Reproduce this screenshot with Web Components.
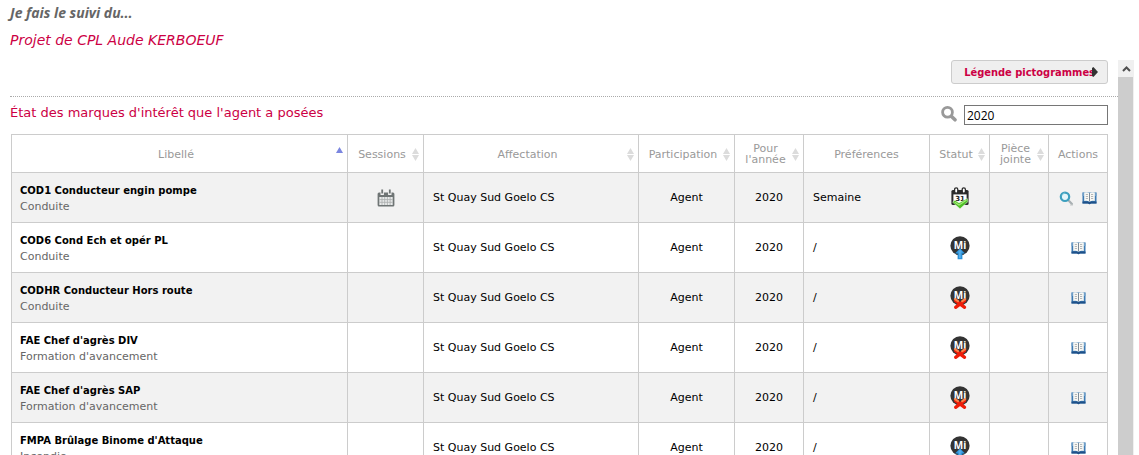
<!DOCTYPE html>
<html lang="fr">
<head>
<meta charset="utf-8">
<title>Suivi des marques d'intérêt</title>
<style>
  html, body { height: 100%; }
  body {
    margin: 0;
    overflow: hidden;
    background: #fff;
    color: #000;
    font-family: Verdana, "DejaVu Sans", sans-serif;
    font-size: 11px;
  }
</style>
</head>
<body>
<suivi-page>
  <span slot="intro">Je fais le suivi du...</span>
  <span slot="project">Projet de CPL Aude KERBOEUF</span>
  <legend-button slot="tools">Légende pictogrammes</legend-button>
  <span slot="title">État des marques d'intérêt que l'agent a posées</span>
  <search-box slot="search" data-value="2020"></search-box>
  <marques-table></marques-table>
</suivi-page>

<script>
const makeTemplate = (html) => {
  const template = document.createElement("template");
  template.innerHTML = html;
  return template;
};

// every icon of the page, by name
const icons = {
  search: `<svg width="16" height="16" viewBox="0 0 16 16">
    <circle cx="6.5" cy="6.3" r="4.9" fill="#fff" stroke="#999" stroke-width="2.8"/>
    <path d="M10.3 10.3L14 13.8" stroke="#999" stroke-width="3.6" stroke-linecap="round"/></svg>`,
  view: `<svg width="15" height="15" viewBox="0 0 15 15">
    <path d="M9.6 9.4L13 13" stroke="#a9b0b3" stroke-width="2.2" stroke-linecap="round"/>
    <path d="M11 14h3" stroke="#c5c8c9" stroke-width="1"/>
    <circle cx="6" cy="5.8" r="4.2" fill="#e4f5fa" stroke="#3d9fbe" stroke-width="2.2"/>
    <path d="M3 4.4a3.6 3.6 0 0 1 3-2.4" fill="none" stroke="#7cc8dc" stroke-width="1"/></svg>`,
  book: `<svg width="15" height="14" viewBox="0 0 15 14">
    <path d="M.5 1.6H14.5V12.4H9L7.5 13.2L6 12.4H.5z" fill="#3d7ab3"/>
    <path d="M.5 1.6H14.5V5H.5z" fill="#6f9fc8"/>
    <path d="M.5 10.6H14.5V12.4H9L7.5 13.2L6 12.4H.5z" fill="#1f5088"/>
    <path d="M2.2 1.4Q5.4.8 7.5 1.9Q9.6.8 12.8 1.4V10Q9.6 9.4 7.5 10.8Q5.4 9.4 2.2 10z" fill="#f8f8f4"/>
    <path d="M7.5 2V10.4" stroke="#6d7d8c" stroke-width=".9"/>
    <path d="M3.8 3.5H6M3.8 5.5H6M3.8 7.5H6M9 3.5H11.2M9 5.5H11.2M9 7.5H11.2" stroke="#b4b6b8" stroke-width="1"/></svg>`,
  sessions: `<svg width="18" height="18" viewBox="0 0 18 18">
    <path d="M2 3.5H16Q17.4 3.5 17.4 5V16Q17.4 17.6 16 17.6H2Q.6 17.6 .6 16V5Q.6 3.5 2 3.5z" fill="#6f7575"/>
    <path d="M2.3 8H15.7V16H2.3z" fill="#e8eaea"/>
    <path d="M5 8V16M7.7 8V16M10.4 8V16M13.1 8V16M2.3 10.6H15.7M2.3 13.3H15.7" stroke="#a8acac" stroke-width=".8"/>
    <path d="M5.2 0V6M12.8 0V6" stroke="#f2f2f2" stroke-width="3.4"/>
    <path d="M5.2 .4V4.6M12.8 .4V4.6" stroke="#6f7575" stroke-width="1.8"/></svg>`,
  planned: `<svg width="20" height="24" viewBox="0 0 20 24">
    <rect x="1.4" y="4" width="17.2" height="15" rx="1.5" fill="#2b2b2b"/>
    <path d="M3.4 8.4H16.6V17H3.4z" fill="#fff"/>
    <rect x="4.6" y="1.8" width="3.2" height="5.4" rx="1.6" fill="#fff" stroke="#2b2b2b" stroke-width="1.3"/>
    <rect x="12.2" y="1.8" width="3.2" height="5.4" rx="1.6" fill="#fff" stroke="#2b2b2b" stroke-width="1.3"/>
    <text x="10" y="14.6" text-anchor="middle" font-family="DejaVu Sans" font-size="7" font-weight="bold" fill="#222">31</text>
    <path d="M2.6 16.2L5 14.2L9 17L17.2 12.4L18 15.6L10 22.8z" fill="#4fc127" stroke="#e2f5d8" stroke-width=".5"/>
    <path d="M4.6 16L9 19L16.6 14" fill="none" stroke="#a4ea78" stroke-width="1.1"/></svg>`,
  sent: `<svg width="20" height="24" viewBox="0 0 20 24">
    <circle cx="10" cy="9.8" r="9.6" fill="#333"/>
    <text x="10" y="12.6" text-anchor="middle" font-family="Open Sans" font-size="10" font-weight="bold" fill="#fff">Mi</text>
    <path d="M10 12.2L15 17.6H12.4V23.2H7.6V17.6H5z" fill="#2a92da"/>
    <path d="M10 13.6L12.6 16.6H10.8V22H9V16.6H7.6z" fill="#55aeea"/></svg>`,
  refused: `<svg width="20" height="24" viewBox="0 0 20 24">
    <circle cx="10" cy="9.8" r="9.6" fill="#333"/>
    <text x="10" y="12.6" text-anchor="middle" font-family="Open Sans" font-size="10" font-weight="bold" fill="#fff">Mi</text>
    <path d="M5.6 14.6L14.6 21.4M14.6 14.6L5.6 21.4" stroke="#ee1c08" stroke-width="3.2" stroke-linecap="round"/>
    <path d="M5 13.2L8 15.2M15.2 13.2L12.2 15.2" stroke="#ff8248" stroke-width="2.2" stroke-linecap="round"/></svg>`,
  sort: `<svg width="7" height="13" viewBox="0 0 7 13">
    <path d="M3.5 0L7 6H0z" fill="#dcdcdc"/><path d="M0 7H7L3.5 13z" fill="#dcdcdc"/></svg>`,
  sortAsc: `<svg width="7" height="15" viewBox="0 0 7 15"><path d="M3.5 0L7 6H0z" fill="#7b86e0"/></svg>`,
  right: `<svg width="6" height="10" viewBox="0 0 6 10"><path d="M0 1L1.4 0L6 5L1.4 10L0 9z" fill="#333"/></svg>`,
  up: `<svg width="9" height="6" viewBox="0 0 9 6"><path d="M1 5L4.5 1.5L8 5" fill="none" stroke="#505050" stroke-width="2"/></svg>`
};

class PictoIcon extends HTMLElement {
  constructor() {
    super();
    this.attachShadow({ mode: "open" });
  }

  connectedCallback() {
    this.shadowRoot.innerHTML = `
      <style>
        :host { display: inline-block; flex: none; line-height: 0; }
        svg { display: block; }
      </style>
      ${icons[this.getAttribute("data-name")]}`;
  }
}
customElements.define("picto-icon", PictoIcon);

const legendTemplate = makeTemplate(`
<style>
  :host { display: block; }
  button {
    position: relative;
    display: block;
    height: 24px;
    padding: 0 12px;
    border: 1px solid #ccc;
    border-radius: 3px;
    background: #efefef;
    color: #cc0044;
    font: bold 11px "DejaVu Sans Condensed", "DejaVu Sans", sans-serif;
    white-space: nowrap;
  }
  /* the arrow lies over the end of the label */
  picto-icon { position: absolute; right: 9px; top: 6px; }
</style>
<button type="button"><slot></slot><picto-icon data-name="right"></picto-icon></button>
`);

class LegendButton extends HTMLElement {
  constructor() {
    super();
    this.attachShadow({ mode: "open" });
    this.shadowRoot.appendChild(legendTemplate.content.cloneNode(true));
  }
}
customElements.define("legend-button", LegendButton);

const searchTemplate = makeTemplate(`
<style>
  :host { display: flex; align-items: center; gap: 7px; }
  label { display: block; }
  input {
    box-sizing: border-box;
    width: 144px;
    height: 20px;
    padding: 1px 2px;
    border: 1px solid #767676;
    border-radius: 0;
    background: #fff;
    color: #000;
    font: 12px "Open Sans", sans-serif;
  }
</style>
<label for="filter" aria-label="Rechercher"><picto-icon data-name="search"></picto-icon></label>
<input id="filter" type="text">
`);

class SearchBox extends HTMLElement {
  constructor() {
    super();
    this.attachShadow({ mode: "open" });
    this.shadowRoot.appendChild(searchTemplate.content.cloneNode(true));
  }

  connectedCallback() {
    this.shadowRoot.querySelector("input").value = this.getAttribute("data-value") || "";
  }
}
customElements.define("search-box", SearchBox);

const columns = [
  { label: "Libellé", sort: "sortAsc" },
  { label: "Sessions", sort: "sort", width: 76 },
  { label: "Affectation", sort: "sort", width: 215 },
  { label: "Participation", sort: "sort", width: 96 },
  { label: "Pour<br>l'année", sort: "sort", width: 69 },
  { label: "Préférences", width: 126 },
  { label: "Statut", sort: "sort", width: 60 },
  { label: "Pièce<br>jointe", sort: "sort", width: 59 },
  { label: "Actions", width: 59 }
];

const rows = [
  { name: "COD1 Conducteur engin pompe", type: "Conduite", sessions: true, pref: "Semaine", status: "planned" },
  { name: "COD6 Cond Ech et opér PL", type: "Conduite", pref: "/", status: "sent" },
  { name: "CODHR Conducteur Hors route", type: "Conduite", pref: "/", status: "refused" },
  { name: "FAE Chef d'agrès DIV", type: "Formation d'avancement", pref: "/", status: "refused" },
  { name: "FAE Chef d'agrès SAP", type: "Formation d'avancement", pref: "/", status: "refused" },
  { name: "FMPA Brûlage Binome d'Attaque", type: "Incendie", pref: "/", status: "sent" }
];

class MarquesTable extends HTMLElement {
  constructor() {
    super();
    this.attachShadow({ mode: "open" });
  }

  connectedCallback() {
    this.render();
  }

  headCell(col) {
    const label = `<span>${col.label}</span>`;
    if (!col.sort) return `<th>${label}</th>`;
    return `<th><button type="button">${label}<picto-icon data-name="${col.sort}"></picto-icon></button></th>`;
  }

  bodyRow(row) {
    const action = (name, title) =>
      `<a href="#" aria-label="${title}"><picto-icon data-name="${name}"></picto-icon></a>`;
    return `<tr>
      <td class="name"><b>${row.name}</b><small>${row.type}</small></td>
      <td class="center">${row.sessions ? `<picto-icon data-name="sessions"></picto-icon>` : ""}</td>
      <td>St Quay Sud Goelo CS</td>
      <td class="center">Agent</td>
      <td class="center">2020</td>
      <td>${row.pref}</td>
      <td class="center"><picto-icon data-name="${row.status}"></picto-icon></td>
      <td></td>
      <td><div class="actions">${row.sessions ? action("view", "Voir") : ""}${action("book", "Fiche")}</div></td>
    </tr>`;
  }

  render() {
    this.shadowRoot.innerHTML = `
      <style>
        :host { display: block; }
        table {
          width: 100%;
          table-layout: fixed;
          border-collapse: collapse;
          line-height: 16px;
        }
        th, td { border: 1px solid #ccc; box-sizing: border-box; }
        th {
          height: 38px;
          padding: 1px 4px 0 4px;
          color: #999;
          font-weight: normal;
          line-height: 11px;
        }
        th button {
          display: flex;
          align-items: center;
          width: 100%;
          padding: 0;
          border: 0;
          background: none;
          color: inherit;
          font: inherit;
        }
        th button span { flex: 1; text-align: center; white-space: nowrap; }
        td { height: 50px; padding: 1px 9px 0; }
        td.name { padding: 2px 8px 0; }
        tbody tr:nth-child(odd) { background: #f2f2f2; }
        td picto-icon { vertical-align: middle; }
        .center { padding: 1px 8px 0; text-align: center; }
        .actions { display: flex; justify-content: center; gap: 8px; margin: 0 -4px; }
        b, small { display: block; white-space: nowrap; }
        b { font-size: 10px; }
        small { color: #666; font-size: 11px; }
      </style>
      <table>
        <colgroup>${columns.map((c) => `<col${c.width ? ` style="width:${c.width}px"` : ""}>`).join("")}</colgroup>
        <thead><tr>${columns.map((c) => this.headCell(c)).join("")}</tr></thead>
        <tbody>${rows.map((r) => this.bodyRow(r)).join("")}</tbody>
      </table>`;
  }
}
customElements.define("marques-table", MarquesTable);

const scrollTemplate = makeTemplate(`
<style>
  :host { display: flex; flex-direction: column; width: 16px; background: #f0f0f0; }
  button {
    display: flex;
    align-items: center;
    justify-content: center;
    height: 17px;
    padding: 0;
    border: 0;
    background: none;
  }
  .thumb { flex: 1; margin-right: 1px; background: #cdcdcd; }
</style>
<button type="button" aria-label="Haut"><picto-icon data-name="up"></picto-icon></button>
<div class="thumb"></div>
`);

class ScrollRail extends HTMLElement {
  constructor() {
    super();
    this.attachShadow({ mode: "open" });
    this.shadowRoot.appendChild(scrollTemplate.content.cloneNode(true));
  }
}
customElements.define("scroll-rail", ScrollRail);

const pageTemplate = makeTemplate(`
<style>
  :host { display: flex; flex-direction: column; height: 100%; }
  header { padding: 4px 10px 10px; }
  h1, h2, h3 { margin: 0; font-weight: normal; }
  h1 {
    color: #666;
    font: italic bold 14px/18px "Open Sans", sans-serif;
  }
  h2 {
    margin-top: 8px;
    color: #cc0044;
    font-size: 14px;
    font-style: italic;
    line-height: 20px;
  }
  h3 { color: #cc0044; font-size: 13px; line-height: 16px; }
  .body { display: flex; flex: 1; min-height: 0; padding-right: 5px; }
  main { flex: 1; min-width: 0; overflow: hidden; padding-left: 10px; }
  .tools {
    display: flex;
    justify-content: flex-end;
    padding: 0 10px 12px 0;
    border-bottom: 1px dotted #aaa;
  }
  .bar {
    display: flex;
    justify-content: space-between;
    padding: 8px 10px 9px 0;
  }
  .list { padding: 0 10px 0 1px; }
</style>
<header>
  <h1><slot name="intro"></slot></h1>
  <h2><slot name="project"></slot></h2>
</header>
<div class="body">
  <main>
    <div class="tools"><slot name="tools"></slot></div>
    <div class="bar"><h3><slot name="title"></slot></h3><slot name="search"></slot></div>
    <div class="list"><slot></slot></div>
  </main>
  <scroll-rail></scroll-rail>
</div>
`);

class SuiviPage extends HTMLElement {
  constructor() {
    super();
    this.attachShadow({ mode: "open" });
    this.shadowRoot.appendChild(pageTemplate.content.cloneNode(true));
  }
}
customElements.define("suivi-page", SuiviPage);
</script>
</body>
</html>
